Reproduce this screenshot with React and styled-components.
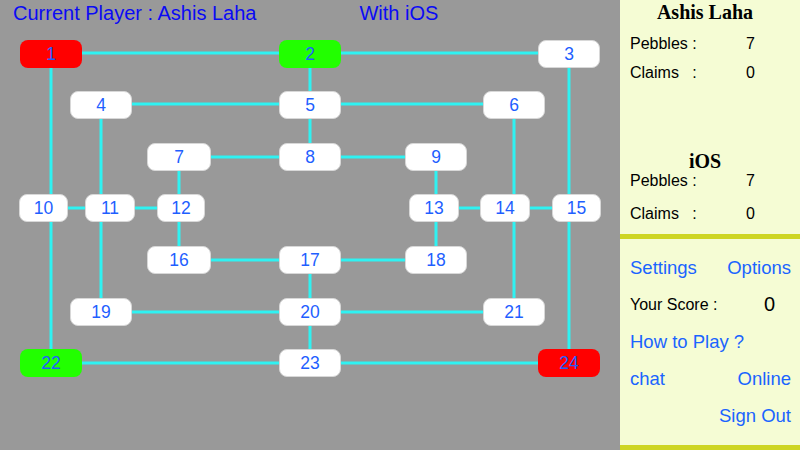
import React from "react";
import styled, { createGlobalStyle } from "styled-components";

const GlobalStyle = createGlobalStyle`
  html, body { margin: 0; padding: 0; }
  body { font-family: "Liberation Sans", Arial, sans-serif; background: #999999; }
`;

// board points: id, left, top, width, colour
const NODES = [
  [1, 20, 40, 62, "red"], [2, 279, 40, 62, "green"], [3, 538, 40, 62],
  [4, 70, 91, 62], [5, 279, 91, 62], [6, 483, 91, 62],
  [7, 147, 143, 64], [8, 279, 143, 62], [9, 405, 143, 62],
  [10, 19, 194, 49], [11, 85, 194, 50], [12, 157, 194, 48],
  [13, 409, 194, 50], [14, 480, 194, 50], [15, 552, 194, 49],
  [16, 147, 246, 64], [17, 279, 246, 62], [18, 405, 246, 62],
  [19, 70, 298, 62], [20, 279, 298, 62], [21, 483, 298, 62],
  [22, 20, 349, 62, "green"], [23, 279, 349, 62], [24, 538, 349, 62, "red"],
];

// lines between points
const LINES = [
  [51, 53, 569, 53], [101, 104, 514, 104], [179, 157, 436, 157],
  [51, 208, 179, 208], [436, 208, 569, 208], [179, 260, 436, 260],
  [101, 312, 514, 312], [51, 363, 569, 363],
  [51, 53, 51, 363], [101, 104, 101, 312], [179, 157, 179, 260],
  [310, 53, 310, 157], [310, 260, 310, 363], [436, 157, 436, 260],
  [514, 104, 514, 312], [569, 53, 569, 363],
];

const fills = { red: "#ff0000", green: "#22ff00" };

export default function App() {
  return (
    <>
      <GlobalStyle />
      <Screen>
        <Board>
          <Header>
            <HeaderText>Current Player : Ashis Laha</HeaderText>
            <HeaderText>With iOS</HeaderText>
          </Header>
          <Lines width="620" height="450">
            {LINES.map(([x1, y1, x2, y2], i) => (
              <line key={i} x1={x1} y1={y1} x2={x2} y2={y2} stroke="#2ff2f2" strokeWidth="3" />
            ))}
          </Lines>
          {NODES.map(([id, x, y, w, c]) => (
            <Point key={id} $fill={fills[c]} style={{ left: x, top: y, width: w }}>
              {id}
            </Point>
          ))}
        </Board>
        <Side>
          <Players>
            <PlayerName>Ashis Laha</PlayerName>
            <StatRow $gap={12}>
              <span>Pebbles :</span>
              <Value>7</Value>
            </StatRow>
            <StatRow $gap={11}>
              <span>Claims &nbsp;&nbsp;:</span>
              <Value>0</Value>
            </StatRow>
            <PlayerName $second>iOS</PlayerName>
            <StatRow $gap={0}>
              <span>Pebbles :</span>
              <Value>7</Value>
            </StatRow>
            <StatRow $gap={15}>
              <span>Claims &nbsp;&nbsp;:</span>
              <Value>0</Value>
            </StatRow>
          </Players>
          <Bar />
          <Menu>
            <MenuRow>
              <Link>Settings</Link>
              <Link>Options</Link>
            </MenuRow>
            <MenuRow>
              <ScoreLabel>Your Score :</ScoreLabel>
              <Score>0</Score>
            </MenuRow>
            <MenuRow>
              <Link>How to Play ?</Link>
            </MenuRow>
            <MenuRow>
              <Link>chat</Link>
              <Link>Online</Link>
            </MenuRow>
            <MenuRow $end>
              <Link>Sign Out</Link>
            </MenuRow>
          </Menu>
          <Bar />
        </Side>
      </Screen>
    </>
  );
}

const Screen = styled.div`
  display: flex;
  width: 800px;
  height: 450px;
  overflow: hidden;
`;

const Board = styled.div`
  position: relative;
  width: 620px;
  height: 450px;
  background: #999999;
`;

const Header = styled.div`
  display: flex;
  gap: 103px;
  padding: 2px 0 0 13px;
`;

const HeaderText = styled.div`
  font-size: 20px;
  color: #0a0af5;
  line-height: 22px;
`;

const Lines = styled.svg`
  position: absolute;
  left: 0;
  top: 0;
`;

const Point = styled.div`
  position: absolute;
  height: 28px;
  box-sizing: border-box;
  border-radius: 8px;
  background: ${(p) => p.$fill || "#ffffff"};
  border: 1px solid ${(p) => (p.$fill ? "transparent" : "#d8d8d8")};
  display: flex;
  align-items: center;
  justify-content: center;
  font-size: 17.5px;
  color: #1f5fff;
`;

const Side = styled.div`
  width: 180px;
  height: 450px;
  background: #f5fcd4;
  display: flex;
  flex-direction: column;
`;

const Players = styled.div`
  height: 234px;
  padding: 0 10px;
  box-sizing: border-box;
`;

const PlayerName = styled.div`
  font-family: "Liberation Serif", "Times New Roman", serif;
  font-weight: bold;
  font-size: 20px;
  text-align: center;
  line-height: 22px;
  padding-top: ${(p) => (p.$second ? "68px" : "1px")};
  padding-right: 10px;
`;

const StatRow = styled.div`
  display: grid;
  grid-template-columns: 116px auto;
  font-size: 16px;
  line-height: 18px;
  margin-top: ${(p) => p.$gap}px;
`;

const Value = styled.span``;

const Bar = styled.div`
  height: 5px;
  background: #cdd523;
`;

const Menu = styled.div`
  flex: 1;
  display: flex;
  flex-direction: column;
  padding: 18px 9px 0 10px;
  gap: 16px;
`;

const MenuRow = styled.div`
  display: flex;
  justify-content: ${(p) => (p.$end ? "flex-end" : "space-between")};
  align-items: center;
  height: 21px;
`;

const Link = styled.span`
  font-size: 18.5px;
  color: #1a64ff;
`;

const ScoreLabel = styled.span`
  font-size: 16px;
  color: #000;
`;

const Score = styled.span`
  font-size: 20px;
  color: #000;
  margin-right: 16px;
`;
